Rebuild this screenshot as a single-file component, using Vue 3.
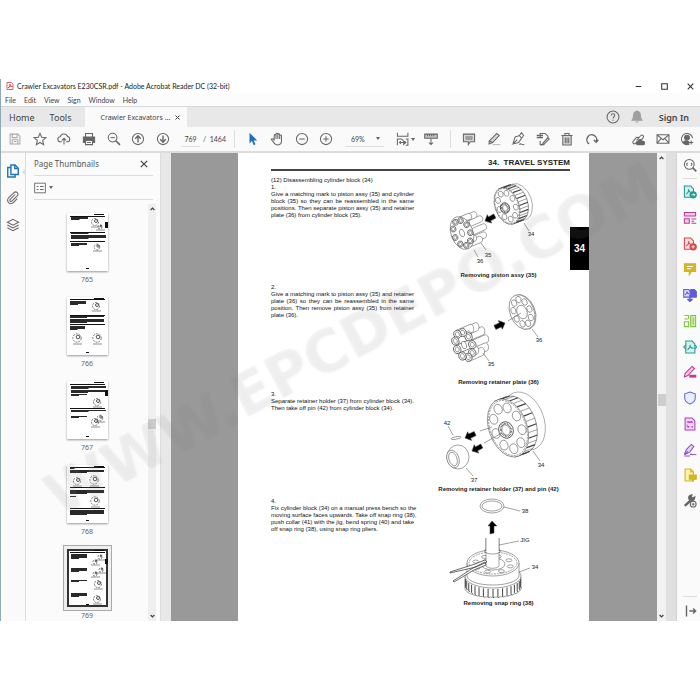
<script setup>
const icons = {
  save: '<path d="M3 3h11l3 3v11H3z"/><path d="M6 3v5h7V3M6 17v-6h8v6M8 13.500h4"/>',
  star: '<path d="M10 2l2.400 5.600 6 .5-4.600 4 1.400 6L10 14.900 4.800 18.100l1.400-6-4.600-4 6-.5z"/>',
  cloud: '<path d="M7 14H5a3.600 3.600 0 0 1-.4-7.200A5.500 5.500 0 0 1 15 6.500 3.800 3.800 0 0 1 15 14h-2"/><path d="M10 18V9M7 12l3-3 3 3"/>',
  print: '<path d="M5 7V2h10v5" /><path d="M2 7h16v8h-3v-3H5v3H2z" fill="currentColor"/><path d="M5 12h10v6H5z" fill="#fff"/><path d="M7 15h6"/>',
  zoomOut: '<circle cx="8" cy="8" r="6.200"/><path d="M5 8h6"/><path d="M12.500 12.500l6 6" stroke-width="2.400"/>',
  up: '<circle cx="10" cy="10" r="8"/><path d="M10 15V6M6 9.500L10 5.500l4 4" stroke-width="2"/>',
  down: '<circle cx="10" cy="10" r="8"/><path d="M10 5v9M6 10.500l4 4 4-4" stroke-width="2"/>',
  pointer: '<path d="M5 1l11 11h-5l2.600 5.600-2.600 1.200L8.500 13 5 16.500z" fill="#1d6fc4" stroke="none"/>',
  hand: '<path d="M6 12V5a1.300 1.300 0 0 1 2.600 0V3a1.300 1.300 0 0 1 2.600 0v1a1.300 1.300 0 0 1 2.600 0v1.500a1.300 1.300 0 0 1 2.600 0V13c0 3.500-2 5.500-5.500 5.500S6 16.500 4.500 14L1.800 10.500c.6-1.300 2-1.200 2.900-.2L6 12M8.600 5v5M11.200 4v6M13.800 5.500V10"/>',
  minus: '<circle cx="10" cy="10" r="8"/><path d="M6 10h8"/>',
  plus: '<circle cx="10" cy="10" r="8"/><path d="M6 10h8M10 6v8"/>',
  fit: '<path d="M2 1v5h15V1M2 19v-9h6l3 3v6M14 10h3v9h-3M2 10h4M5 15h9M7 13l-2 2 2 2M12 13l2 2-2 2"/>',
  ruler: '<path d="M1 3h18v6H1z" fill="#c4c4c4"/><path d="M5 3v3M8 3v3M11 3v3M14 3v3M10 10v8M7 15l3 3 3-3"/>',
  comment: '<path d="M2 3h16v11h-6l-3 4v-4H2z" fill="#d6d6d6"/><path d="M5 7h10M5 10h10"/>',
  pen: '<path d="M3 13L14 2l3.500 3L8 15l-5 2z" fill="#d6d6d6"/><path d="M3 13l5 2"/><path d="M8 18h11" stroke="#bbb"/>',
  sign: '<path d="M3 16l3-9 6-2 3 4-4 6-8 2 6-6M12 5l3-4 3 4-3 4M12 18c2-3 3 1 7 0"/>',
  convert: '<path d="M6 8V2h7l4 4v1M6 13v5h6"/><path d="M1 5h9M1 8h9" stroke-width="2"/><path d="M10 16l7-8 2 2-7 7-3 1z" fill="#d6d6d6"/>',
  trash: '<path d="M4 5h12v13.500H4z" fill="#dedede"/><path d="M2 5h16M7 5V2h6v3M7.500 8v8M10 8v8M12.500 8v8"/>',
  rotate: '<path d="M6 17A7 7 0 1 1 16 14M12.500 11.500l3.500 3 3-3.500" stroke-width="2"/>',
  link: '<path d="M8 12l6-7c2-2 5 1 3.500 3L15 11M11 8l-3-.5-5 6c-1.500 2 1 4.500 3 3l3-3"/><path d="M9 18a2 2 0 0 1 1-4 3 3 0 0 1 6-.5 2.300 2.300 0 0 1 2 4.500z" fill="currentColor"/>',
  mail: '<path d="M1.500 4h17v12h-17zM1.500 4L10 11l8.500-7M1.500 16l6-7M18.500 16l-6-7"/>',
  user: '<path d="M13 17.500A8 8 0 1 1 18 9"/><circle cx="10" cy="8" r="3.500" fill="currentColor"/><path d="M4.500 15c2-3 6-3 8-1v3c-3 1-6 .5-8-2z" fill="currentColor"/><path d="M16 12v6M13 15h6"/>',
  help: '<circle cx="10" cy="10" r="8.500"/><path d="M7.500 8c0-3.500 5-3.500 5 0 0 2-2.500 2-2.500 4M10 14v1.500"/>',
  bell: '<path d="M10 1.500c4 1 5 3.500 5 7 0 3 .8 4.500 2 6H3c1.200-1.500 2-3 2-6 0-3.500 1-6 5-7z" fill="currentColor"/><path d="M8 17h4" />',
  pages: '<path d="M7 1.500h6l4.500 4.500v9H7z"/><path d="M12.500 2v4.500H17M7 5H2.500v13.500H13V15"/>',
  clip: '<path d="M13 5L6 12c-1.500 2 .5 4 2.300 2.500L16 7c3-3.500-1.500-7.500-4.600-4.600L4 9.500c-5 5 2 11.500 6.800 6.800L16 11"/>',
  layers: '<path d="M10 2l8 4-8 4.200L2 6zM2 10l8 4.200L18 10M2 14l8 4.200L18 14"/>',
  list: '<path d="M1 2h18v16H1z"/><path d="M4.500 7.500h3M4.500 12.500h3M10 7.500h6M10 12.500h6" stroke-width="2"/>',
  find: '<circle cx="9" cy="9" r="7"/><path d="M6.500 7L5 9l1.500 2M11.500 7L13 9l-1.500 2"/><path d="M14 14l5 5" stroke-width="2.400"/>',
  exportPdf: '<path d="M2 1.500h9l4 4v12H2z" fill="#d5efec"/><path d="M4.500 13c3-2 4-5 3.500-7 0 3 2 5 5 4.500"/><circle cx="14.500" cy="14" r="4.500" fill="currentColor"/><path d="M12 14h5M15 12l2 2-2 2" stroke="#fff" stroke-width="1.200"/>',
  organize: '<path d="M2 2h16v5H2z" fill="#f2c9e4"/><path d="M2 11h7v6.500H2z" fill="#f2c9e4"/><path d="M12 11.500h7M12 17.500h7M12 14.500h4" />',
  create: '<path d="M2 1.500h9l4 4v12H2z" fill="#f9dcdc"/><path d="M4.500 13c3-2 4-5 3.500-7 0 3 2 5 5 4.500"/><circle cx="14.500" cy="14" r="4.500" fill="currentColor"/><path d="M12 14h5M14.500 11.500v5" stroke="#fff" stroke-width="1.200"/>',
  note: '<path d="M2 2.500h16v11h-6l-3 5v-5H2z" fill="currentColor"/><path d="M5.500 6.500h9M5.500 9.500h6" stroke="#fff"/>',
  combine: '<path d="M1 2h7l2 3v8H1z" fill="#d9d8fa"/><path d="M11 2h5l3 3v8h-8z" fill="currentColor"/><path d="M3 10c2-2 3-3 2.500-5 0 2 1 3 3 3"/><path d="M10 10v9M6.500 15.500L10 19l3.500-3.500" stroke-width="2.200"/>',
  compress: '<path d="M11 2h7v16h-7z" fill="#d6efb9"/><path d="M2 2h6v5M2 7h5M2 11h6v7H2zM14.500 5v10"/>',
  protectPdf: '<path d="M4 1.500h9l4 4v13H4z" fill="#d5efec"/><path d="M6.500 14c3-2 4-5 3.500-7 0 3 2 5 5 4.500M4 7l-3 3 3 3M16.500 7l3 3-3 3"/>',
  redact: '<path d="M3 12L13 2l3.500 3L7 15l-5 2z" fill="#f2c9e4"/><path d="M9 16h10" stroke-width="4"/>',
  shield: '<path d="M10 1.500l7.500 2.500v6c0 4.500-3.500 7-7.500 8.500C6 17 2.500 14.500 2.500 10V4z" fill="#eceefe"/>',
  form: '<path d="M3 1.500h10l4 4v13H3z" fill="#efd3f2"/><path d="M6 7h8M6 14h3M12 14h2M6 11v1" stroke-width="2.200"/>',
  fill: '<path d="M2 16l3-7 7-7 3.500 3-6 8-7.500 4 5-5" fill="#e4d5f6"/><path d="M10 17c2-3 3 1 5-.5s1.500 1 4 0M2 18.500h8"/>',
  stamp: '<path d="M3 1.500h8l4 4v13H3z" fill="#fbf0b5"/><path d="M11 1.500v4h4"/><path d="M9 10h10v6h-3l-2 3v-3H9z" fill="currentColor"/>',
  wrench: '<path d="M2.500 17L11 9" stroke-width="3.500"/><path d="M17 4l-3 2-2-2 1-3c-4 0-6 3-4.500 6.500L11 10c3 1 6-1.500 6-6z" fill="currentColor"/><circle cx="14.500" cy="14.500" r="4.200" fill="#fafafa"/><path d="M12.500 14.500h4M14.500 12.500v4"/>',
  collapse: '<path d="M5 2v16M9 10h9M14.500 6.500L18 10l-3.500 3.500" stroke-width="2"/>'
}

const group1 = [['save', 'Save'], ['star', 'Star'], ['cloud', 'Upload'], ['print', 'Print'], ['zoomOut', 'Find'], ['up', 'Previous page'], ['down', 'Next page']]
const group2 = [['pointer', 'Select'], ['hand', 'Pan'], ['minus', 'Zoom out'], ['plus', 'Zoom in']]
const group3 = [['comment', 'Comment'], ['pen', 'Highlight'], ['sign', 'Sign'], ['convert', 'Edit'], ['trash', 'Delete'], ['rotate', 'Rotate']]
const group4 = [['link', 'Share link'], ['mail', 'Email'], ['user', 'Invite']]
const tools = [
  ['exportPdf', 'Export PDF', 'teal'], ['organize', 'Organize', 'magenta'], ['create', 'Create PDF', 'red'], ['note', 'Comment', 'gold'],
  ['combine', 'Combine', 'indigo'], ['compress', 'Compress', 'green'], ['protectPdf', 'Convert', 'teal'], ['redact', 'Redact', 'magenta'],
  ['shield', 'Protect', 'blue'], ['form', 'Prepare form', 'violet'], ['fill', 'Fill and sign', 'purple'], ['stamp', 'Send for comments', 'gold'], ['wrench', 'More tools', 'gray']
]

// Thumbnail marks: text bands [x, y, width, rows] and drawings [x, y, size]
const thumbs = [
  { n: 765, text: [[4, 4, 17, 3], [4, 20, 35, 1], [4, 22, 35, 4], [4, 30, 16, 3]], rules: [3, 19, 28], art: [[28, 9, 5], [33, 14, 3], [30, 34, 4]], tab: [38, 9, 6] },
  { n: 766, text: [[3, 4, 16, 4], [3, 19, 34, 2], [3, 22, 34, 4], [3, 29, 15, 4]], rules: [2, 18, 27], art: [[29, 9, 5], [10, 41, 6], [30, 41, 6]] },
  { n: 767, text: [[4, 5, 35, 3], [4, 9, 34, 3], [4, 13, 16, 2], [4, 29, 35, 2], [4, 35, 16, 2]], rules: [3, 27], art: [[30, 21, 5], [28, 41, 5], [33, 37, 4]], tab: [38, 9, 6] },
  { n: 768, text: [[3, 2, 9, 2], [3, 5, 34, 3], [3, 25, 34, 4], [3, 31, 12, 1], [3, 45, 34, 5]], rules: [2, 22, 43], art: [[10, 16, 5], [27, 15, 6], [28, 36, 6]] },
  { n: 769, text: [[4, 5, 16, 5], [4, 19, 16, 4], [4, 31, 16, 2], [4, 44, 16, 4]], rules: [3], art: [[28, 13, 3], [33, 8, 3], [28, 25, 3], [34, 21, 3], [31, 35, 5], [30, 50, 5]], tab: [38, 10, 5], current: true }
]

const ring = (cx, cy, rx, ry, rot, n, start = 0) => {
  const r = (rot * Math.PI) / 180
  return Array.from({ length: n }, (_, i) => {
    const a = start + (i * 2 * Math.PI) / n
    const x = rx * Math.cos(a)
    const y = ry * Math.sin(a)
    return [cx + x * Math.cos(r) - y * Math.sin(r), cy + x * Math.sin(r) + y * Math.cos(r)]
  })
}
const ell = (x, y, rx, ry, rot = 0, extra = '') =>
  `<ellipse cx="${x.toFixed(1)}" cy="${y.toFixed(1)}" rx="${rx}" ry="${ry}" transform="rotate(${rot} ${x.toFixed(1)} ${y.toFixed(1)})" ${extra}/>`
const line = (a, b, c, d, w = 0.500) => `<path d="M${a} ${b}L${c} ${d}" stroke-width="${w}"/>`
const arrow = (x, y, rot) =>
  `<path transform="translate(${x} ${y}) rotate(${rot})" d="M0 0l5-4.500v2.500h6v4.500H5V5z" fill="#000"/>`

function drum(cx, cy, rx, ry, tx, ty, bx, by, holes, hr) {
  const rot = -20
  let s = ell(cx + bx, cy + by, rx * 1.050, ry, rot, 'stroke-width=".4"') + ell(cx + tx, cy + ty, rx * 1.050, ry, rot)
  const front = ring(cx, cy, rx, ry, rot, 32)
  const back = ring(cx + tx, cy + ty, rx * 1.050, ry, rot, 32)
  front.forEach((p, i) => {
    if (i < 13 || i > 21) s += line(p[0], p[1], back[i][0], back[i][1], i % 2 ? 1.200 : 0.500)
  })
  s += ell(cx, cy, rx, ry, rot) + ell(cx, cy, rx * 0.940, ry * 0.950, rot, 'stroke-dasharray="2 1"')
  ring(cx, cy, rx * 0.690, ry * 0.720, rot, holes, 0.300).forEach(p => { s += ell(p[0], p[1], hr * 0.800, hr, rot) })
  s += ell(cx - 2, cy + 2, rx * 0.380, ry * 0.280, rot, 'stroke-width=".8"')
  s += ell(cx - 2, cy + 2, rx * 0.240, ry * 0.200, rot, 'stroke-width="2.500" stroke-dasharray=".6 .7"')
  return s
}
function pistons(cx, cy, rx, ry, r, plate) {
  const dots = ring(cx, cy, rx, ry, -20, 9, 0.200).sort((a, b) => b[0] - a[0])
  let s = ''
  dots.forEach(([x, y]) => {
    s += `<path d="M${x - 1} ${y - r}l14-6c4 0 4 ${r * 1.700} 2 ${r * 2}l-14 6z"/>`
  })
  if (plate) s += ell(cx, cy, rx + 3, ry + 4, -20)
  dots.forEach(([x, y]) => { s += ell(x, y, r * 0.900, r, -20, 'stroke-width=".7"') + ell(x, y, r * 0.500, r * 0.600, -20) })
  return s + ell(cx, cy, rx * 0.300, ry * 0.300, -20)
}
function plateArt() {
  let s = ell(523, 312, 12, 18, -22) + ell(522, 312, 12, 18, -22)
  ring(522, 312, 8, 13, -22, 9).forEach(p => { s += ell(p[0], p[1], 2.500, 3.400, -22) })
  return s + ell(522, 312, 5, 7, -22) + line(508, 321, 521, 313)
}
function jigArt() {
  let s = '<path d="M465 578v12c3 11 52 11 56 0v-12z"/>' + ell(493, 577, 28, 12)
  ring(493, 578, 28, 12, 0, 36).forEach(([x, y]) => {
    if (y > 578) s += `<path d="M${x.toFixed(1)} ${y.toFixed(1)}v8l1 1" stroke-width="1"/>`
  })
  s += '<path d="M467 564v13c2 12 49 12 52 0v-13z" />' + ell(493, 564, 26, 13) + ell(493, 564, 24, 11, 0, 'stroke-dasharray="2 .8"') + ell(493, 565, 12, 6)
  ring(493, 565, 18, 8, 0, 8, 0.300).forEach(p => { s += ell(p[0], p[1], 3, 1.500) })
  s += '<path d="M486 539v28c2 3 11 3 13 0v-28"/>' + ell(492.500, 552, 8, 3, 0, 'fill="none"') + '<path d="M486 539v14h13v-14" stroke="none"/><path d="M486 539v13M499 539v13"/>'
  s += '<path d="M450 573l25-8 10-4 2 2-11 5-26 6zM453 582l20-13 12-6 1 3-12 5-20 12z" stroke-width=".8"/>'
  return s
}

const steps = [
  {
    heading: '(12) Disassembling cylinder block (34)', no: '1.', box: '427 177 143 94', caption: 'Removing piston assy (35)', alt: 'Piston assembly and cylinder block',
    lines: ['Give a matching mark to piston assy (35) and cylinder', 'block (35) so they can be reassembled in the same', 'positions. Then separate piston assy (35) and retainer', 'plate (36) from cylinder block (35).'],
    art: drum(507, 206, 12, 19, 8, -3, 12, -4, 9, 3) + pistons(462, 233, 8, 13, 3, true) + arrow(485, 221, -28) + line(524, 223, 529, 231) + line(481, 243, 486, 250) + line(474, 250, 478, 257),
    labels: [[531, 236, '34'], [488, 257, '35'], [480, 263, '36']]
  },
  {
    no: '2.', box: '427 284 143 94', caption: 'Removing retainer plate (36)', alt: 'Piston assembly and retainer plate',
    lines: ['Give a matching mark to piston assy (35) and retainer', 'plate (36) so they can be reassembled in the same', 'position. Then remove piston assy (35) from retainer', 'plate (36).'],
    art: pistons(464, 345, 8, 13, 4, false) + plateArt() + arrow(505, 323, 155) + line(532, 329, 538, 337) + line(483, 353, 489, 361),
    labels: [[539, 342, '36'], [491, 366, '35']]
  },
  {
    no: '3.', box: '427 391 143 94', caption: 'Removing retainer holder (37) and pin (42)', alt: 'Cylinder block, retainer holder and pin',
    lines: ['Separate retainer holder (37) from cylinder block (34).', 'Then take off pin (42) from cylinder block (34).'],
    art: drum(508, 428, 19, 30, 8, -3, 16, -7, 9, 5) + line(480, 431, 492, 427) + line(484, 443, 502, 433) + arrow(465, 438, -25) + arrow(472, 451, -28) + ell(458, 457, 11, 12) + ell(453, 459, 6, 9, -18) + ell(453, 459, 4, 7, -18) + ell(456, 438, 5, 1.200, -10) + line(448, 426, 453, 435) + line(466, 468, 473, 476) + line(533, 451, 540, 461),
    labels: [[447, 425, '42'], [474, 482, '37'], [541, 467, '34']]
  },
  {
    no: '4.', box: '427 499 143 101', caption: 'Removing snap ring (38)', alt: 'Snap ring removal with jig', tall: true,
    lines: ['Fix cylinder block (34) on a manual press bench so the', 'moving surface faces upwards. Take off snap ring (38),', 'push collar (41) with the jig, bend spring (40) and take', 'off snap ring (38), using snap ring pliers.'],
    art: ell(492, 507, 12, 7) + ell(492, 507, 10, 5) + '<path d="M492 522l-4 5h2v8l4-1v-7h3z" fill="#000"/>' + jigArt() + line(504, 508, 520, 512) + line(499, 546, 519, 542) + line(519, 573, 530, 569),
    labels: [[525, 514, '38'], [525, 543, 'JIG'], [535, 570, '34']]
  }
]
</script>

<template>
  <div class="desktop">
    <main class="window">
      <header class="titlebar">
        <svg class="app-logo" viewBox="0 0 16 16"><path d="M2 1h9l3 3v11H2z" fill="#fff" stroke="#c33" stroke-width="1.500" /><path d="M4 12c3-2 4-5 4-8 0 4 2 5 5 5-3-1-6 0-9 3" fill="none" stroke="#c33" stroke-width="1.500" /></svg>
        <h1>Crawler Excavators E230CSR.pdf - Adobe Acrobat Reader DC (32-bit)</h1>
        <div class="win-buttons">
          <button aria-label="Minimize"><svg viewBox="0 0 10 10"><path d="M1 5h8" /></svg></button>
          <button aria-label="Maximize"><svg viewBox="0 0 10 10"><path d="M1 1h8v8H1z" /></svg></button>
          <button aria-label="Close"><svg viewBox="0 0 10 10"><path d="M1 1l8 8M9 1L1 9" /></svg></button>
        </div>
      </header>

      <nav class="menubar">
        <button v-for="m in ['File', 'Edit', 'View', 'Sign', 'Window', 'Help']" :key="m">{{ m }}</button>
      </nav>

      <div class="tabs">
        <button class="home">Home</button>
        <button class="tools-tab">Tools</button>
        <div class="doc-tab">
          <button>Crawler Excavators ...</button>
          <button class="tab-close" aria-label="Close tab"><svg viewBox="0 0 10 10"><path d="M1 1l8 8M9 1L1 9" /></svg></button>
        </div>
        <div class="account">
          <button class="icon" aria-label="Help"><svg viewBox="0 0 20 20" v-html="icons.help" /></button>
          <button class="icon bell" aria-label="Notifications"><svg viewBox="0 0 20 20" v-html="icons.bell" /></button>
          <button class="signin">Sign In</button>
        </div>
      </div>

      <div class="toolbar">
        <div class="group g1">
          <button v-for="[k, t] in group1" :key="k" class="icon" :class="k" :aria-label="t"><svg viewBox="0 0 20 20" v-html="icons[k]" /></button>
        </div>
        <div class="pager">
          <input aria-label="Page number" value="769" />
          <span>/&nbsp; 1464</span>
        </div>
        <div class="group g2">
          <button v-for="[k, t] in group2" :key="k" class="icon" :aria-label="t"><svg viewBox="0 0 20 20" v-html="icons[k]" /></button>
        </div>
        <button class="zoom" aria-label="Zoom level"><span>69%</span><i class="caret" /></button>
        <button class="icon fit" aria-label="Fit page"><svg viewBox="0 0 20 20" v-html="icons.fit" /><i class="caret" /></button>
        <button class="icon ruler" aria-label="Reading mode"><svg viewBox="0 0 20 20" v-html="icons.ruler" /></button>
        <div class="group g3">
          <button v-for="[k, t] in group3" :key="k" class="icon" :aria-label="t"><svg viewBox="0 0 20 20" v-html="icons[k]" /></button>
        </div>
        <div class="group g4">
          <button v-for="[k, t] in group4" :key="k" class="icon" :aria-label="t"><svg viewBox="0 0 20 20" v-html="icons[k]" /></button>
        </div>
      </div>

      <div class="workspace">
        <nav class="rail">
          <button class="icon active" aria-label="Page thumbnails"><svg viewBox="0 0 20 20" v-html="icons.pages" /></button>
          <button class="icon" aria-label="Attachments"><svg viewBox="0 0 20 20" v-html="icons.clip" /></button>
          <button class="icon" aria-label="Layers"><svg viewBox="0 0 20 20" v-html="icons.layers" /></button>
        </nav>

        <aside class="panel">
          <div class="panel-head">
            <h2>Page Thumbnails</h2>
            <button class="close" aria-label="Close panel"><svg viewBox="0 0 10 10"><path d="M1 1l8 8M9 1L1 9" /></svg></button>
          </div>
          <div class="panel-tools">
            <button class="icon options" aria-label="Options"><svg viewBox="0 0 20 20" v-html="icons.list" /><i class="caret" /></button>
          </div>
          <div class="panel-body">
            <div class="thumbs">
              <a v-for="t in thumbs" :key="t.n" href="#" class="thumb" :class="{ current: t.current }">
                <svg viewBox="0 0 41 58">
                  <rect v-for="y in t.rules" :key="'r' + y" x="3" :y="y" width="35" height="1" />
                  <rect x="27" y="1" width="10" height="1" />
                  <g v-for="(b, i) in t.text" :key="'t' + i">
                    <rect v-for="k in b[3]" :key="k" :x="b[0]" :y="b[1] + k - 1" :width="k === b[3] ? b[2] * 0.500 : b[2]" height="0.900" />
                  </g>
                  <g v-for="(a, i) in t.art" :key="'a' + i" fill="none" stroke="#444">
                    <circle :cx="a[0]" :cy="a[1]" :r="a[2] * 0.700" stroke-width=".7" stroke-dasharray="2 1" />
                    <circle :cx="a[0] + 1" :cy="a[1] - 1" :r="a[2] * 0.300" stroke-width=".9" />
                    <path :d="`M${a[0] - 4} ${a[1] + a[2]}h9`" stroke-width=".6" />
                  </g>
                  <rect v-if="t.tab" :x="t.tab[0]" :y="t.tab[1]" width="3" :height="t.tab[2]" />
                  <rect x="19" y="55" width="3" height="1" />
                </svg>
                <span>{{ t.n }}</span>
              </a>
            </div>
            <div class="scroll"><svg viewBox="0 0 8 5"><path d="M1 4l3-3 3 3" /></svg><i class="before" /><b /><i class="after" /><svg viewBox="0 0 8 5"><path d="M1 1l3 3 3-3" /></svg></div>
          </div>
        </aside>

        <div class="gutter" />

        <section class="viewer">
          <article class="sheet">
            <div class="sheet-main">
              <h3>34.&nbsp; TRAVEL SYSTEM</h3>
              <section v-for="s in steps" :key="s.no" class="step">
                <div class="copy">
                  <p v-if="s.heading">{{ s.heading }}</p>
                  <p>{{ s.no }}</p>
                  <p class="body"><span v-for="(l, i) in s.lines" :key="l" :class="{ full: i < s.lines.length - 1 }">{{ l }}</span></p>
                </div>
                <figure :class="{ tall: s.tall }">
                  <svg :viewBox="s.box" role="img" :aria-label="s.alt">
                    <g class="ink" v-html="s.art" />
                    <text v-for="[x, y, t] in s.labels" :key="t" :x="x" :y="y">{{ t }}</text>
                  </svg>
                  <figcaption>{{ s.caption }}</figcaption>
                </figure>
              </section>
            </div>
            <div class="sheet-side"><span>34</span></div>
          </article>
        </section>

        <div class="scroll main-scroll"><svg viewBox="0 0 8 5"><path d="M1 4l3-3 3 3" /></svg><i class="before" /><b /><i class="after" /><svg viewBox="0 0 8 5"><path d="M1 1l3 3 3-3" /></svg></div>
        <div class="right-gutter" />

        <nav class="tool-rail">
          <button class="icon first" aria-label="Search tools"><svg viewBox="0 0 20 20" v-html="icons.find" /></button>
          <div class="tool-list">
            <button v-for="[k, t, c] in tools" :key="k" class="icon" :class="c" :aria-label="t"><svg viewBox="0 0 20 20" v-html="icons[k]" /></button>
          </div>
          <button class="icon last" aria-label="Collapse tools"><svg viewBox="0 0 20 20" v-html="icons.collapse" /></button>
        </nav>
      </div>
      <div class="watermark">WWW.EPCDEPO.COM</div>
    </main>
  </div>
</template>

<style>
body { margin: 0; background: #fff; }
</style>

<style scoped>
.desktop { padding: 79px 0; overflow: hidden; font-family: "Noto Sans", "Open Sans", sans-serif; color: #444; }
.desktop * { box-sizing: border-box; }
.window { position: relative; border-left: 1px solid #8fa9b5; background: #fff; }
button { border: 0; padding: 0; margin: 0; background: none; font: inherit; color: inherit; white-space: nowrap; }
h1, h2, h3, p, figure { margin: 0; font-weight: 400; }
svg { display: block; fill: none; stroke: currentColor; }
.icon { display: flex; align-items: center; justify-content: center; flex: none; width: 14px; height: 14px; color: #666; }
.icon svg { width: 14px; height: 14px; flex: none; stroke-width: 1.500; }
.caret { flex: none; border: 2px solid transparent; border-top: 3px solid #666; border-bottom: 0; }

.titlebar { display: flex; align-items: center; height: 14px; padding: 0 6px 0 5px; }
.app-logo { width: 8px; height: 8px; margin-right: 3px; }
.titlebar h1 { font-family: Lato, "Open Sans", sans-serif; font-size: 7px; line-height: 10px; color: #222; }
.win-buttons { display: flex; gap: 19px; margin-left: auto; }
.win-buttons svg { width: 7px; height: 7px; stroke: #333; stroke-width: 1.500; }

.menubar { display: flex; gap: 8px; height: 13px; padding: 0 4px; background: #fcfcfc; font-family: Lato, "Open Sans", sans-serif; font-size: 7px; }

.tabs { display: flex; align-items: stretch; height: 21px; background: #e8e8e8; border-top: 1px solid #d8d8d8; font-size: 9px; color: #444; }
.home { padding: 0 0 0 8px; }
.tools-tab { padding: 0 13px 0 15px; }
.doc-tab { display: flex; align-items: center; gap: 5px; width: 102px; padding-left: 16px; background: #fafafa; font-size: 7px; }
.tab-close svg { width: 5px; height: 5px; stroke-width: 2; }
.account { display: flex; align-items: center; gap: 10px; margin-left: auto; padding-right: 11px; }
.bell { color: #a0a0a0; }
.signin { margin-left: 5px; font-size: 9px; font-weight: 600; }

.toolbar { display: flex; align-items: center; height: 26px; padding: 0 6px 0 7px; background: #fafafa; border-bottom: 2px solid #dcdcdc; font-family: Lato, "Open Sans", sans-serif; font-size: 7px; color: #444; }
.group { display: flex; align-items: center; justify-content: space-between; flex: none; }
.g1 { width: 162px; }
.save { color: #aaa; }
.g2 { width: 87px; margin-left: 11px; }
.g3 { width: 137px; margin-left: 11px; }
.g4 { width: 63px; margin-left: auto; }
.pager { display: flex; align-items: center; width: 65px; height: 18px; padding-left: 11px; border-right: 1px solid #ddd; }
.pager input { width: 19px; height: 15px; padding: 0; border: 0; border-bottom: 1px solid #ddd; background: none; text-align: center; font: inherit; color: inherit; }
.pager span { padding-left: 3px; white-space: nowrap; }
.zoom { display: flex; align-items: center; justify-content: space-between; width: 39px; height: 15px; margin-left: 12px; padding: 0 4px 0 6px; border-bottom: 1px solid #ddd; font-size: 7px; }
.fit { width: 20px; margin-left: 11px; gap: 1px; }
.ruler { justify-content: flex-start; width: 27px; height: 18px; margin-left: 9px; border-right: 1px solid #ddd; }

.workspace { display: flex; align-items: stretch; }
.rail { position: relative; display: flex; flex-direction: column; align-items: center; gap: 13px; width: 25px; padding-top: 11px; background: #fafafa; border-right: 1px solid #ddd; }
.active { color: #1b74b3; }
.active svg { stroke-width: 2; }
.rail::after { content: ""; position: absolute; right: -1px; top: 15px; border: 4px solid transparent; border-right: 4px solid #ddd; border-left: 0; }

.panel { display: flex; flex-direction: column; flex: none; width: 134px; background: #fbfbfb; }
.panel-head, .panel-tools { display: flex; align-items: center; margin: 0 7px 0 8px; border-bottom: 1px solid #ddd; }
.panel-head { height: 23px; justify-content: space-between; }
.panel-head h2 { font-size: 8px; line-height: 12px; color: #555; }
.close { margin-right: 5px; }
.close svg { width: 8px; height: 8px; stroke-width: 1.500; }
.panel-tools { height: 24px; }
.options { width: auto; gap: 3px; }
.options svg { width: 12px; height: 12px; }
.panel-body { display: flex; flex: 1; margin-top: 4px; }
.thumbs { display: flex; flex-direction: column; align-items: center; gap: 12px; flex: 1; padding: 9px 0 0; }
.thumb { display: flex; flex-direction: column; align-items: center; gap: 3px; color: #666; text-decoration: none; font-size: 7px; line-height: 11px; }
.thumb svg { width: 41px; height: 58px; background: #fff; fill: #111; stroke: none; box-shadow: 0 1px 2px #999; }
.current svg { box-shadow: inset 0 0 0 2px #333, 0 0 0 3px #eee, 0 0 0 4px #aaa; }

.scroll { display: flex; flex-direction: column; align-items: center; flex: none; width: 8px; margin-right: 4px; padding: 3px 0; background: #efefef; }
.scroll svg { width: 5px; height: 4px; stroke: #444; stroke-width: 2; }
.scroll b { width: 8px; height: 10px; background: #cdcdcd; }
.before { flex: 53; }
.after { flex: 47; }
.gutter { width: 11px; flex: none; background: #e8e8e8; border-left: 1px solid #ddd; }

.viewer { display: flex; flex: 1; min-width: 0; padding: 0 68px 0 67px; background: #999; }
.sheet { display: flex; flex: 1; min-width: 0; padding-left: 33px; background: #fff; color: #222; font-family: "Liberation Sans", Arial, sans-serif; }
.sheet-main { flex: 1; min-width: 0; }
.sheet h3 { height: 18px; margin-bottom: 6px; padding-top: 5px; border-bottom: 2px solid #444; text-align: right; font-size: 8px; line-height: 10px; font-weight: 700; }
.step { display: flex; justify-content: space-between; gap: 13px; min-height: 107px; }
.copy { flex: 1; min-width: 0; font-size: 6px; line-height: 7px; color: #111; }
.copy span { display: block; white-space: nowrap; }
.copy .full { text-align-last: justify; }
figure { flex: none; width: 143px; font-family: "Liberation Sans", Arial, sans-serif; }
figure svg { width: 143px; height: 94px; }
.tall svg { height: 101px; }
.ink { fill: #fff; stroke: #444; stroke-width: 0.500; }
figure text { fill: #222; stroke: none; font-size: 6px; text-anchor: middle; }
figcaption { font-size: 6px; line-height: 9px; font-weight: 700; text-align: center; color: #222; }
.sheet-side { width: 19px; padding-top: 74px; }
.sheet-side span { display: block; background: #000; color: #fff; font-size: 10px; line-height: 43px; font-weight: 700; text-align: center; }

.main-scroll { width: 9px; margin: 0; background: #f2f2f2; }
.main-scroll b { height: 12px; }
.right-gutter { width: 11px; flex: none; background: #e0e0e0; border-right: 1px solid #d2d2d2; }

.tool-rail { display: flex; flex-direction: column; align-items: center; flex: none; width: 23px; background: #fafafa; padding: 5px 0 3px 2px; }
.first { height: 21px; padding-bottom: 6px; border-bottom: 1px solid #ddd; }
.last { margin-top: auto; height: 22px; padding-top: 6px; border-top: 1px solid #ddd; }
.tool-list { display: flex; flex-direction: column; justify-content: space-between; height: 323px; margin-top: 6px; }
.teal { color: #219b94; }
.magenta { color: #c2389a; }
.red { color: #d9484d; }
.gold { color: #d3b61c; }
.indigo { color: #5c5bd6; }
.green { color: #80c342; }
.blue { color: #5c6ddd; }
.violet { color: #b13fc0; }
.purple { color: #8950c7; }

.watermark { position: absolute; left: 50%; top: 48%; transform: translate(-50%, -50%) rotate(-28deg); font-family: "DejaVu Sans", sans-serif; font-size: 58px; line-height: 1; font-weight: 700; white-space: nowrap; pointer-events: none; color: rgba(180, 180, 180, 0.090); text-shadow: 1px 1px 3px rgba(0, 0, 0, 0.040); }
</style>
